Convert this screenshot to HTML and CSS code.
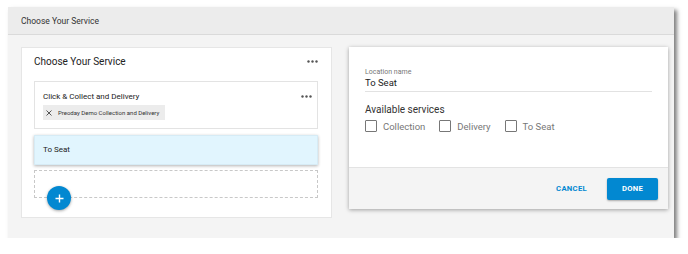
FILE: index.html
```html
<!DOCTYPE html>
<html lang="en">
<head>
    <meta charset="UTF-8">
    <meta name="viewport" content="width=device-width, initial-scale=1.0">
    <title>Choose Your Service</title>
    <link rel="stylesheet" href="styles.css">
</head>
<body>
    <div class="frame">
        <div class="frame-header">Choose Your Service</div>
        <div class="frame-body">
            <div class="card">
                <div class="card-title">
                    <span>Choose Your Service</span>
                    <svg class="dots" width="11" height="3" viewBox="0 0 11 3"><circle cx="1.5" cy="1.5" r="1.2"/><circle cx="5.5" cy="1.5" r="1.2"/><circle cx="9.5" cy="1.5" r="1.2"/></svg>
                </div>

                <div class="service">
                    <div class="service-title">
                        <span>Click &amp; Collect and Delivery</span>
                        <svg class="dots" width="11" height="3" viewBox="0 0 11 3"><circle cx="1.5" cy="1.5" r="1.2"/><circle cx="5.5" cy="1.5" r="1.2"/><circle cx="9.5" cy="1.5" r="1.2"/></svg>
                    </div>
                    <div class="chip">
                        <svg width="6" height="6" viewBox="0 0 6 6"><path d="M0.5 0.5 L5.5 5.5 M5.5 0.5 L0.5 5.5" stroke="#444" stroke-width="0.9"/></svg>
                        <span>Preoday Demo Collection and Delivery</span>
                    </div>
                </div>

                <div class="service selected">To Seat</div>

                <div class="dropzone">
                    <button class="fab">
                        <svg width="9" height="9" viewBox="0 0 9 9"><path d="M4.5 0.5 V8.5 M0.5 4.5 H8.5" stroke="#fff" stroke-width="1.4"/></svg>
                    </button>
                </div>
            </div>

            <div class="panel">
                <div class="panel-main">
                    <div class="field">
                        <div class="field-label">Location name</div>
                        <div class="field-value">To Seat</div>
                    </div>
                    <div class="section-label">Available services</div>
                    <div class="checks">
                        <label class="check"><span class="box"></span>Collection</label>
                        <label class="check"><span class="box"></span>Delivery</label>
                        <label class="check"><span class="box"></span>To Seat</label>
                    </div>
                </div>
                <div class="panel-footer">
                    <button class="btn-text">CANCEL</button>
                    <button class="btn-done">DONE</button>
                </div>
            </div>
        </div>
    </div>
</body>
</html>
```

FILE: styles.css
```css
body {
    margin: 0;
    background-color: #fff;
    font-family: Roboto, "Liberation Sans", Arial, sans-serif;
    color: #333;
}
.frame {
    margin: 7px 0 0 8px;
    width: 666px;
    height: 231px;
    background-color: #f4f4f4;
    box-shadow: 3px 3px 4px rgba(0,0,0,0.5);
}
.frame-header {
    height: 27px;
    line-height: 28px;
    padding-left: 13px;
    background-color: #ececec;
    border-bottom: 1px solid #dadada;
    font-size: 8.5px;
    color: #333;
}
.frame-body {
    display: flex;
    align-items: flex-start;
    gap: 17px;
    padding: 12px 6px 0 13px;
}
.card {
    box-sizing: border-box;
    width: 311px;
    height: 171px;
    background-color: #fff;
    border: 1px solid #e6e6e6;
    padding: 0 13px 0 12px;
}
.card-title {
    display: flex;
    justify-content: space-between;
    align-items: center;
    height: 27px;
    margin-bottom: 6px;
    font-size: 10px;
    color: #222;
}
.dots {
    fill: #555;
}
.service {
    box-sizing: border-box;
    border: 1px solid #e3e3e3;
    padding: 6px 5px 8px 8px;
    font-size: 8px;
    color: #222;
}
.service-title {
    display: flex;
    justify-content: space-between;
    align-items: center;
    height: 16px;
}
.chip {
    display: inline-flex;
    align-items: center;
    gap: 6px;
    height: 15px;
    margin-top: 1px;
    padding: 0 6px 0 3px;
    background-color: #ececec;
    font-size: 6px;
    color: #333;
}
.service.selected {
    height: 30px;
    margin-top: 6px;
    padding: 0 8px;
    line-height: 28px;
    background-color: #e1f5fe;
    border-color: #d6ebf5;
    box-shadow: 0 1px 3px rgba(0,0,0,0.3);
}
.dropzone {
    position: relative;
    box-sizing: border-box;
    height: 28px;
    margin-top: 5px;
    border: 1px dashed #c8c8c8;
}
.fab {
    position: absolute;
    left: 12px;
    top: 15px;
    width: 24px;
    height: 24px;
    padding: 0;
    border: none;
    border-radius: 50%;
    background-color: #0288d1;
    box-shadow: 0 1px 3px rgba(0,0,0,0.35);
    display: flex;
    align-items: center;
    justify-content: center;
}
.panel {
    box-sizing: border-box;
    width: 319px;
    height: 162px;
    background-color: #fff;
    box-shadow: 0 1px 4px rgba(0,0,0,0.35);
    display: flex;
    flex-direction: column;
}
.panel-main {
    flex: 1;
    padding: 20px 16px 0 16px;
}
.field {
    border-bottom: 1px solid #e2e2e2;
    padding-bottom: 2px;
}
.field-label {
    font-size: 7px;
    line-height: 10px;
    color: #777;
}
.field-value {
    font-size: 9.5px;
    line-height: 12px;
    color: #222;
}
.section-label {
    margin-top: 10px;
    font-size: 10px;
    line-height: 16px;
    color: #333;
}
.checks {
    display: flex;
    gap: 14px;
    margin-top: 2px;
}
.check {
    display: flex;
    align-items: center;
    gap: 6px;
    font-size: 9.5px;
    color: #777;
}
.box {
    box-sizing: border-box;
    width: 12px;
    height: 12px;
    border: 1.5px solid #777;
    border-radius: 1px;
}
.panel-footer {
    height: 41px;
    border-top: 1px solid #e3e3e3;
    background-color: #f4f4f4;
    display: flex;
    align-items: center;
    justify-content: flex-end;
    gap: 20px;
    padding-right: 10px;
}
.btn-text {
    border: none;
    background: none;
    padding: 0;
    font-family: inherit;
    font-size: 7.7px;
    font-weight: 700;
    letter-spacing: 0.3px;
    color: #0288d1;
}
.btn-done {
    width: 51px;
    height: 22px;
    border: none;
    border-radius: 2px;
    background-color: #0288d1;
    box-shadow: 0 1px 2px rgba(0,0,0,0.3);
    font-family: inherit;
    font-size: 7.7px;
    font-weight: 700;
    letter-spacing: 0.3px;
    color: #fff;
}
```
